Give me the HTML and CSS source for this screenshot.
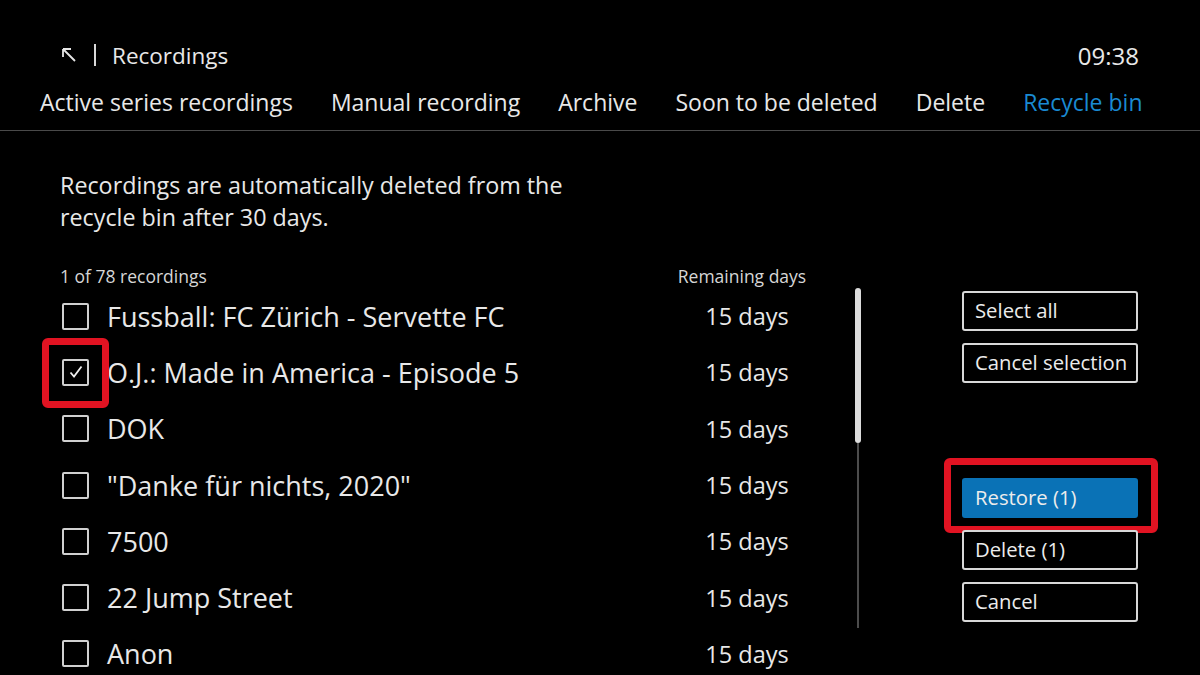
FILE: index.html
```html
<!DOCTYPE html>
<html lang="en">
  <head>
    <meta charset="UTF-8" />
    <meta name="viewport" content="width=device-width, initial-scale=1.0" />
    <title>Recordings - Recycle bin</title>
    <link rel="stylesheet" href="styles.css">
  </head>
  <body>
    <header class="topbar">
      <div class="crumb">
        <svg class="back" width="16" height="16" viewBox="0 0 16 16">
          <path d="M14 14 L2 2 M2 2 H10 M2 2 V10" stroke="#e6e6e6" stroke-width="1.8" fill="none" />
        </svg>
        <span class="sep"></span>
        <span class="title">Recordings</span>
      </div>
      <div class="clock">09:38</div>
    </header>

    <nav class="tabs">
      <span class="tab">Active series recordings</span>
      <span class="tab">Manual recording</span>
      <span class="tab">Archive</span>
      <span class="tab">Soon to be deleted</span>
      <span class="tab">Delete</span>
      <span class="tab active">Recycle bin</span>
    </nav>

    <main class="content">
      <p class="info">Recordings are automatically deleted from the<br />recycle bin after 30 days.</p>

      <div class="main">
        <div class="list">
          <div class="list-head">
            <span class="count">1 of 78 recordings</span>
            <span class="days-head">Remaining days</span>
          </div>

          <div class="row">
            <span class="check"></span>
            <span class="name">Fussball: FC Zürich - Servette FC</span>
            <span class="days">15 days</span>
          </div>
          <div class="row">
            <span class="check checked focus">
              <svg width="16" height="14" viewBox="0 0 16 14">
                <path d="M2.5 7.5 L6 11.5 L13.5 1.5" stroke="#f0f0f0" stroke-width="1.8" fill="none" />
              </svg>
            </span>
            <span class="name">O.J.: Made in America - Episode 5</span>
            <span class="days">15 days</span>
          </div>
          <div class="row">
            <span class="check"></span>
            <span class="name">DOK</span>
            <span class="days">15 days</span>
          </div>
          <div class="row">
            <span class="check"></span>
            <span class="name">"Danke für nichts, 2020"</span>
            <span class="days">15 days</span>
          </div>
          <div class="row">
            <span class="check"></span>
            <span class="name">7500</span>
            <span class="days">15 days</span>
          </div>
          <div class="row">
            <span class="check"></span>
            <span class="name">22 Jump Street</span>
            <span class="days">15 days</span>
          </div>
          <div class="row">
            <span class="check"></span>
            <span class="name">Anon</span>
            <span class="days">15 days</span>
          </div>
        </div>

        <div class="scroll">
          <div class="thumb"></div>
          <div class="track"></div>
        </div>

        <div class="actions">
          <button class="btn">Select all</button>
          <button class="btn">Cancel selection</button>
          <button class="btn primary focus">Restore (1)</button>
          <button class="btn">Delete (1)</button>
          <button class="btn">Cancel</button>
        </div>
      </div>
    </main>
  </body>
</html>
```

FILE: styles.css
```css
body {
  margin: 0;
  background: #000000;
  color: #e8e8e8;
  font-family: "Open Sans", "Noto Sans", sans-serif;
  width: 1200px;
  height: 675px;
  overflow: hidden;
}

.topbar {
  display: flex;
  justify-content: space-between;
  align-items: center;
  height: 40px;
  margin-top: 35px;
  padding: 0 61px 0 61px;
}

.crumb {
  display: flex;
  align-items: center;
}

.back {
  display: block;
}

.sep {
  width: 2px;
  height: 22px;
  background: #d8d8d8;
  margin: 0 16px 0 17px;
}

.title {
  font-size: 22.5px;
}

.clock {
  font-size: 24px;
}

.tabs {
  display: flex;
  gap: 38px;
  height: 40px;
  margin-top: 7px;
  padding: 0 40px 8px 40px;
  border-bottom: 1px solid #4a4a4a;
  align-items: center;
}

.tab {
  font-size: 23px;
  white-space: nowrap;
}

.tab.active {
  color: #1a8ad2;
}

.content {
  padding-left: 60px;
}

.info {
  margin: 38px 0 0 0;
  font-size: 23.3px;
  line-height: 32px;
}

.main {
  display: flex;
  margin-top: 31px;
}

.list {
  width: 747px;
}

.list-head {
  display: flex;
  justify-content: space-between;
  height: 24px;
  align-items: center;
  font-size: 17.5px;
  color: #d6d6d6;
}

.days-head {
  width: 130px;
  text-align: center;
}

.row {
  display: grid;
  grid-template-columns: 27px 1fr 130px;
  column-gap: 18px;
  align-items: center;
  height: 56.3px;
  padding-left: 2px;
}

.check {
  position: relative;
  box-sizing: border-box;
  width: 27px;
  height: 27px;
  border: 2px solid #d0d0d0;
  border-radius: 2px;
  display: flex;
  align-items: center;
  justify-content: center;
}

.name {
  font-size: 27px;
  white-space: nowrap;
}

.days {
  font-size: 23.5px;
  text-align: center;
  padding-left: 10px;
}

.focus::after {
  content: "";
  position: absolute;
  top: -23px;
  bottom: -24px;
  left: -22px;
  right: -22px;
  border: 7px solid #e11322;
  border-radius: 6px;
}

.scroll {
  display: flex;
  flex-direction: column;
  align-items: center;
  margin: 24px 0 0 48px;
  width: 6px;
}

.thumb {
  width: 6px;
  height: 155px;
  border-radius: 3px;
  background: #dcdcdc;
}

.track {
  width: 2px;
  height: 185px;
  background: #4c4c4c;
}

.actions {
  display: flex;
  flex-direction: column;
  gap: 12px;
  margin: 27px 0 0 101px;
}

.btn {
  position: relative;
  box-sizing: border-box;
  width: 176px;
  height: 40px;
  padding: 0 0 2px 11px;
  text-align: left;
  font-family: "Open Sans", "Noto Sans", sans-serif;
  font-size: 20.3px;
  color: #ececec;
  background: #000000;
  border: 2px solid #d8d8d8;
  border-radius: 3px;
}

.btn:nth-child(3) {
  margin-top: 83px;
}

.btn.primary {
  background: #0a72b6;
  border-color: #0a72b6;
}

.btn.focus::after {
  top: -22px;
  bottom: -17px;
  left: -20px;
  right: -22px;
}
```
